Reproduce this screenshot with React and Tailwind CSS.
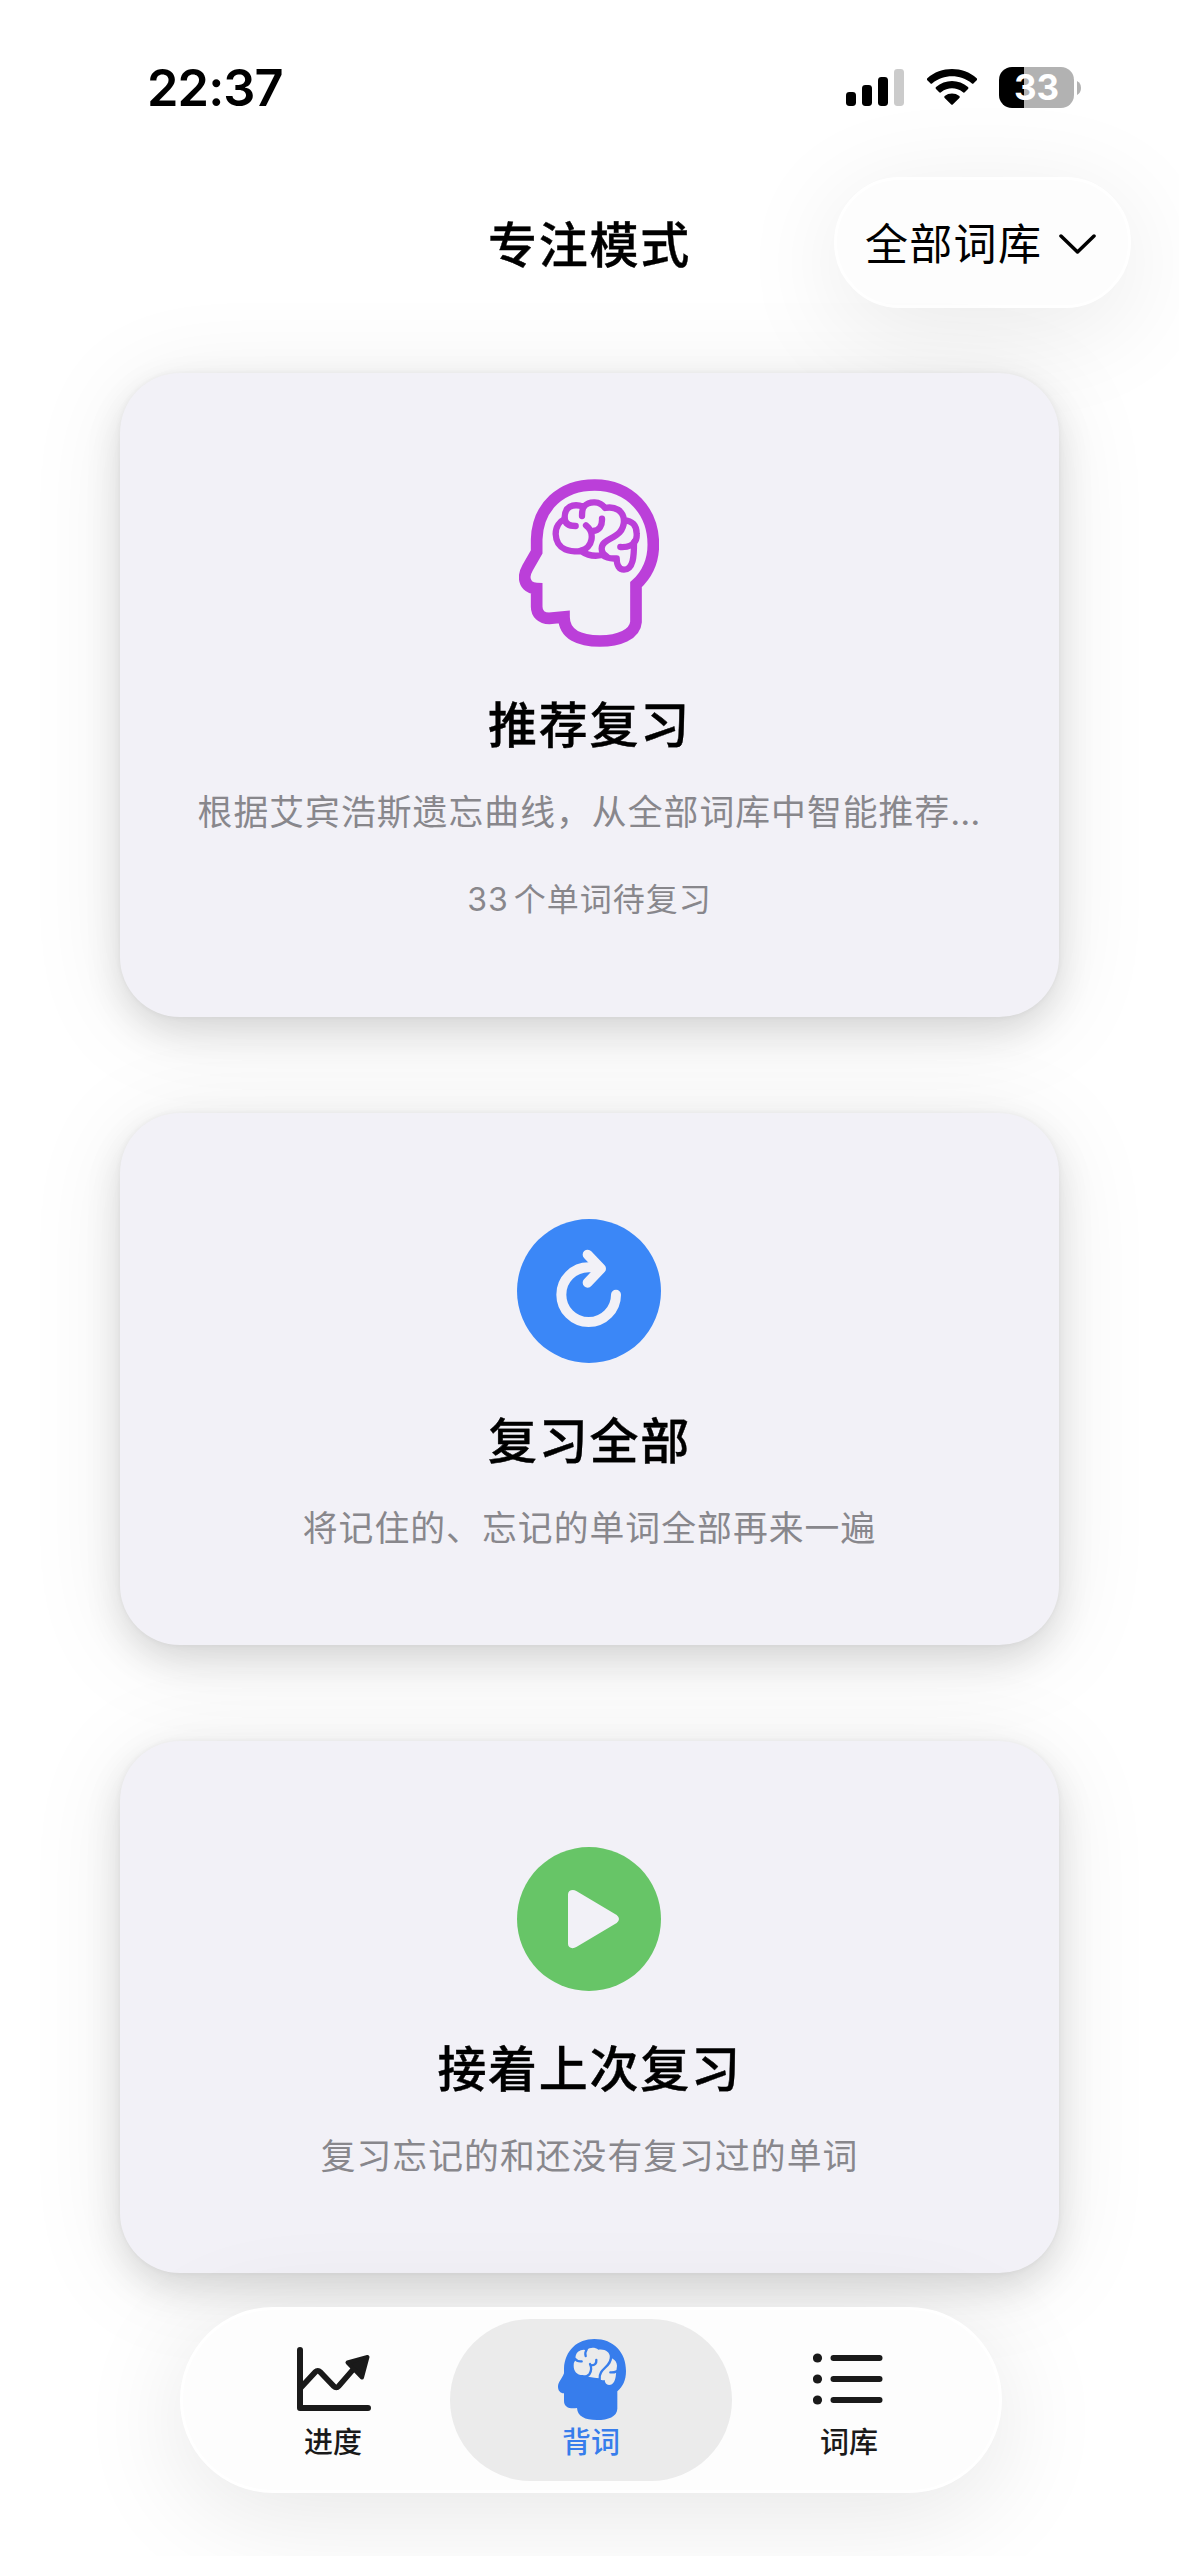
function SignalIcon() {
  return (
    <svg className="mr-px" width="58" height="38" viewBox="0 0 58 38">
      <rect x="0" y="23" width="10" height="14" rx="3.4" />
      <rect x="16" y="16" width="10" height="21" rx="3.4" />
      <rect x="32" y="8" width="10" height="29" rx="3.4" />
      <rect x="48" y="0" width="10" height="37" rx="3.4" fill="#cbcbcb" />
    </svg>
  );
}

function WifiIcon() {
  return (
    <svg width="50" height="38" viewBox="0 0 150 114">
      <path d="M1 34Q-2 31 1 28C42 -9 108 -9 149 28Q152 31 149 34L140 43Q137 46 134 43C100 15 50 15 16 43Q13 46 10 43Z" />
      <path d="M27 60Q24 57 27 54C54 30 96 30 123 54Q126 57 123 60L114 69Q111 73 107 69C88 54 62 54 43 69Q39 73 36 69Z" />
      <path d="M53 87Q50 84 53 81C66 71 84 71 97 81Q100 84 97 87L78 106Q75 109 72 106Z" />
    </svg>
  );
}

function BatteryIcon() {
  return (
    <div className="flex items-center gap-[3px]">
      <div className="flex h-[41px] w-[75px] items-center justify-center rounded-[13px] bg-[linear-gradient(90deg,#000_25px,#b2b2b2_25px)] font-['Inter'] text-[35px] font-bold leading-none text-white">
        33
      </div>
      <svg width="4" height="14" viewBox="0 0 4 14" fill="#b2b2b2">
        <path d="M0 0Q4 2 4 7T0 14Z" />
      </svg>
    </div>
  );
}

const BRAIN_OUTLINE =
  "M275 274C245 275 199 274 197 222C197 200 209 184 224 177C222 140 248 129 281 140C299 122 330 123 345 144C375 138 400 152 402 181C427 181 440 197 440 221C441 233 438 242 432 248C432 289 430 329 402 329C388 329 380 317 380 295C360 297 349 294 337 285C313 290 292 286 275 274";
const BRAIN_FOLDS =
  "M224 177C226 192 238 198 257 198M281 140C276 149 276 157 276 168M288 196C316 216 309 265 272 272M308 213C329 213 337 196 336 176M402 181C401 240 335 230 335 266C335 278 342 284 350 289M391 261C414 262 428 257 433 245";

function HeadIcon() {
  return (
    <svg
      className="mr-[2px] h-[168px] w-[140px]"
      viewBox="87 57 420 504"
      fill="none"
      stroke="#bb3fd9"
    >
      <path
        d="M140 276V238C143 139 214 75 314 75C421 76 490 154 490 254C490 303 473 342 438 374V486C435 524 386 543 330 543C270 543 222 525 222 471Q201 473 178 475C154 475 140 460 140 440V386C116 385 104 371 104 351C104 340 108 332 113 323L140 276Z"
        strokeWidth="35"
      />
      <g strokeWidth="19" strokeLinecap="round" strokeLinejoin="round">
        <path d={BRAIN_OUTLINE} />
        <path d={BRAIN_FOLDS} />
      </g>
    </svg>
  );
}

function RestartIcon() {
  return (
    <svg className="mr-px h-36 w-36" viewBox="111 87 432 432">
      <circle cx="327" cy="303" r="216" fill="#3b87f7" />
      <g
        fill="none"
        stroke="#f2f1f7"
        strokeWidth="30"
        strokeLinecap="round"
        strokeLinejoin="round"
      >
        <path d="M408 314A82 82 0 1 1 326 232H350" />
        <path d="M323 194L363 236L323 278" />
      </g>
      <path d="M335 216L363 236L335 248Z" fill="#f2f1f7" />
    </svg>
  );
}

function PlayIcon() {
  return (
    <svg className="mr-px h-36 w-36" viewBox="111 81 432 432">
      <circle cx="327" cy="297" r="216" fill="#67c567" />
      <path
        d="M264 223C264 211 278 207 289 213L410 285Q424 297 410 309L289 381C278 388 264 384 264 372Z"
        fill="#f2f1f7"
      />
    </svg>
  );
}

function ChartIcon() {
  return (
    <svg className="ml-[2px] h-16 w-[74px]" viewBox="0 0 74 64" fill="none" stroke="#1a1a1a">
      <path d="M3 3V61H71" strokeWidth="6" strokeLinecap="round" strokeLinejoin="round" />
      <path
        d="M3.500 41L18.300 25Q20.800 22.400 23.200 25L36.800 39.200Q39.300 41.800 41.700 39.200L60 18"
        strokeWidth="5.600"
      />
      <path
        d="M50.500 15.500L70.500 10L65 30.500Z"
        fill="#1a1a1a"
        strokeWidth="4"
        strokeLinejoin="round"
      />
    </svg>
  );
}

function HeadSolidIcon() {
  return (
    <svg className="ml-px h-[81px] w-[68px]" viewBox="54 54 204 243">
      <path
        d="M72 157V142C75 88 112 54 163 54C221 54 258 94 258 150C258 178 248 197 232 211V263C231 287 205 297 171 297C134 297 113 286 111 261C88 264 72 259 72 239V217C60 216 54 208 54 197C54 183 65 176 72 157Z"
        fill="#377dec"
      />
      <path
        d="M128 162C110 162 101 150 101 134Q101 124 106 118Q105 100 114 92Q127 83 140 88C150 78 165 79 175 86C195 83 210 93 210 109Q210 116 208 120Q213 109 218 113Q230 119 231 134L228 158C227 176 221 192 207 192Q195 191 194 177Q182 180 177 172Q163 171 149 168Q139 163 128 162Z"
        fill="#ebebeb"
      />
      <g fill="none" stroke="#377dec" strokeWidth="7" strokeLinecap="round">
        <path d="M103 112Q112 123 125 121M140 86Q134 94 137 105M150 129Q158 145 148 160Q141 167 133 168M154 133Q170 133 169 117" />
        <path d="M213 106C215 139 175 141 179 175M211 154Q221 155 230 151" />
      </g>
    </svg>
  );
}

function ListIcon() {
  return (
    <svg className="mr-[2px] h-[52px] w-[70px]" viewBox="0 0 70 52" fill="#1a1a1a">
      {[5, 26, 47].map((y) => (
        <g key={y}>
          <circle cx="4.500" cy={y} r="4.600" />
          <rect x="17.500" y={y - 3} width="52" height="6" rx="3" />
        </g>
      ))}
    </svg>
  );
}

function Card({ icon, title, text, note }) {
  return (
    <section className="flex w-[939px] flex-col items-center rounded-[60px] bg-[#f2f1f7] px-[75px] pb-[93px] pt-[106px] shadow-[0_0_6px_rgba(0,0,0,0.05),0_15px_36px_rgba(0,0,0,0.12),0_10px_100px_rgba(0,0,0,0.08)]">
      {icon}
      <h2 className="mt-[49px] h-[60px] whitespace-nowrap text-[49px] font-medium leading-[60px] tracking-[1.700px] [-webkit-text-stroke:0.4px_#000]">
        {title}
      </h2>
      <p className="mt-8 h-12 whitespace-nowrap text-[34.800px] leading-[48px] tracking-[1.050px] text-[#88878c]">
        {text}
      </p>
      {note && (
        <p className="mt-10 flex h-[48px] gap-[5px] whitespace-nowrap text-[32px] leading-[48px] tracking-[1px] text-[#88878c]">
          <span>{note.count}</span>
          <span>{note.label}</span>
        </p>
      )}
    </section>
  );
}

function Tab({ icon, label, active }) {
  return (
    <button
      className={
        active
          ? "flex h-[162px] w-[282px] flex-col items-center rounded-[81px] bg-[#ebebeb] text-[#377dec]"
          : "flex h-[162px] w-[234px] flex-col items-center rounded-[81px] text-[#1a1a1a]"
      }
    >
      <span className="mt-[18px] flex h-[84px] items-center justify-center">{icon}</span>
      <span className="mt-[2px] text-[29px] font-medium leading-[40px]">{label}</span>
    </button>
  );
}

export default function App() {
  return (
    <div className="flex h-[2556px] w-[1179px] flex-col items-center overflow-hidden bg-white font-['Inter','Noto_Sans_CJK_SC',sans-serif] text-black">
      <div className="flex h-[175px] w-full shrink-0 items-center justify-between pl-[147px] pr-[98px]">
        <time className="text-[50.500px] font-semibold leading-[60px] tracking-[-0.9px]">22:37</time>
        <div className="flex items-center gap-[22px]">
          <SignalIcon />
          <WifiIcon />
          <BatteryIcon />
        </div>
      </div>
      <header className="grid h-[198px] w-full shrink-0 grid-cols-[1fr_auto_1fr] items-start pr-12 pt-[2px]">
        <h1 className="col-start-2 ml-12 mt-[39px] text-[49px] font-medium leading-[60px] tracking-[1.700px] [-webkit-text-stroke:0.4px_#000]">
          专注模式
        </h1>
        <button className="flex h-[131px] w-[297px] items-center gap-[17px] justify-self-end rounded-[66px] border-[3px] border-white bg-[#fdfdfd] pl-[28px] pt-[3px] text-[43px] tracking-[1.300px] shadow-[0_20px_110px_rgba(0,0,0,0.09)]">
          全部词库
          <svg width="37" height="22" viewBox="0 0 37 22" fill="none" stroke="#000" strokeWidth="3.500" strokeLinecap="round" strokeLinejoin="round">
            <path d="M2 3L18.500 19L35 3" />
          </svg>
        </button>
      </header>
      <main className="flex shrink-0 flex-col gap-24">
        <Card
          icon={<HeadIcon />}
          title="推荐复习"
          text="根据艾宾浩斯遗忘曲线，从全部词库中智能推荐…"
          note={{ count: 33, label: "个单词待复习" }}
        />
        <Card icon={<RestartIcon />} title="复习全部" text="将记住的、忘记的单词全部再来一遍" />
        <Card icon={<PlayIcon />} title="接着上次复习" text="复习忘记的和还没有复习过的单词" />
      </main>
      <nav className="relative ml-[3px] mt-[34px] flex h-[186px] w-[822px] shrink-0 items-center justify-center rounded-[93px] border-[3px] border-white bg-[#fdfdfd] shadow-[0_20px_110px_rgba(0,0,0,0.1)]">
        <Tab icon={<ChartIcon />} label="进度" />
        <Tab icon={<HeadSolidIcon />} label="背词" active />
        <Tab icon={<ListIcon />} label="词库" />
      </nav>
    </div>
  );
}
